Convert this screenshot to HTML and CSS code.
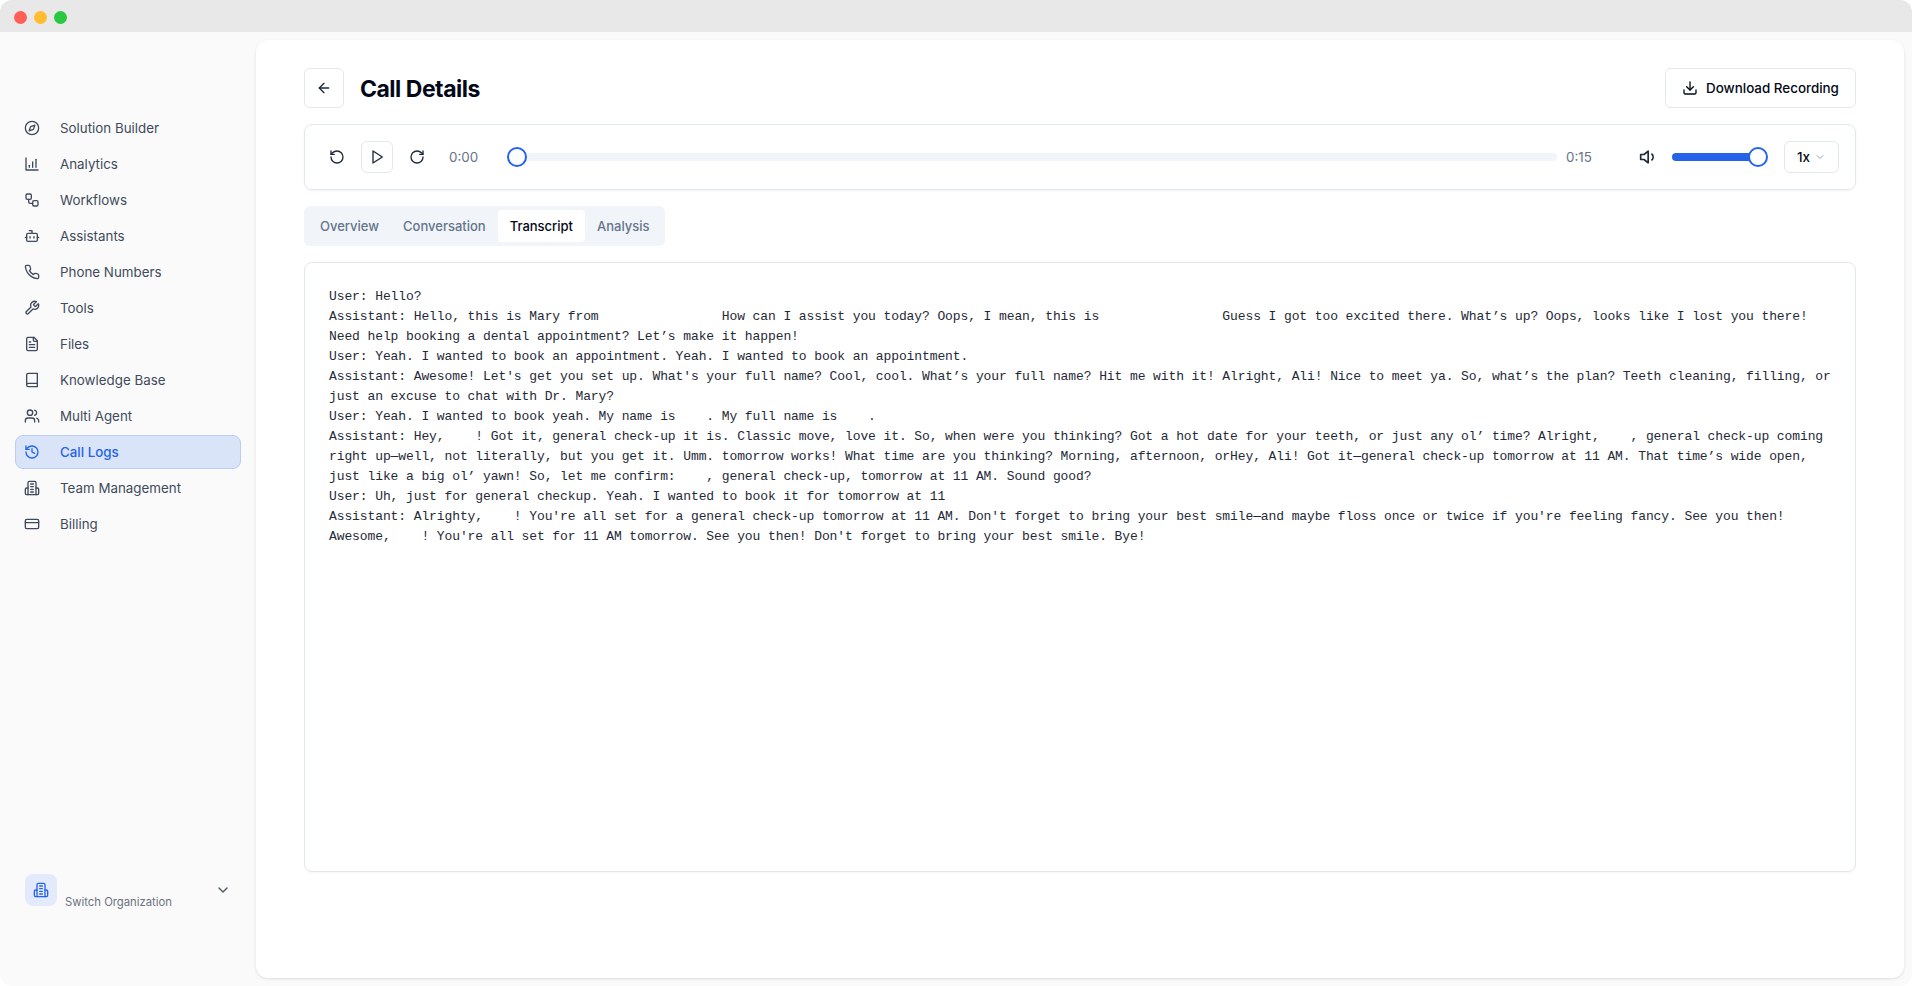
FILE: index.html
```html
<!DOCTYPE html>
<html lang="en">
<head>
<meta charset="utf-8">
<title>Call Details</title>
<link rel="stylesheet" href="styles.css">
</head>
<body>
<div class="window">
  <div class="titlebar">
    <span class="dot dot-red"></span><span class="dot dot-yellow"></span><span class="dot dot-green"></span>
  </div>
  <div class="app">
    <aside class="sidebar">
      <nav class="nav">
        <a class="nav-item"><svg class="icon" viewBox="0 0 24 24"><circle cx="12" cy="12" r="10"/><polygon points="16.24 7.76 14.12 14.12 7.76 16.24 9.88 9.88 16.24 7.76"/></svg><span>Solution Builder</span></a>
        <a class="nav-item"><svg class="icon" viewBox="0 0 24 24"><path d="M3 3v18h18"/><path d="M13 17V9"/><path d="M18 17V5"/><path d="M8 17v-3"/></svg><span>Analytics</span></a>
        <a class="nav-item"><svg class="icon" viewBox="0 0 24 24"><rect x="3" y="3" width="8" height="8" rx="2"/><path d="M7 11v4a2 2 0 0 0 2 2h4"/><rect x="13" y="13" width="8" height="8" rx="2"/></svg><span>Workflows</span></a>
        <a class="nav-item"><svg class="icon" viewBox="0 0 24 24"><path d="M12 8V4H8"/><rect x="4" y="8" width="16" height="12" rx="2"/><path d="M2 14h2"/><path d="M20 14h2"/><path d="M15 13v2"/><path d="M9 13v2"/></svg><span>Assistants</span></a>
        <a class="nav-item"><svg class="icon" viewBox="0 0 24 24"><path d="M22 16.92v3a2 2 0 0 1-2.18 2 19.79 19.79 0 0 1-8.63-3.07 19.5 19.5 0 0 1-6-6 19.79 19.79 0 0 1-3.07-8.67A2 2 0 0 1 4.11 2h3a2 2 0 0 1 2 1.72 12.84 12.84 0 0 0 .7 2.81 2 2 0 0 1-.45 2.11L8.09 9.91a16 16 0 0 0 6 6l1.27-1.27a2 2 0 0 1 2.11-.45 12.84 12.84 0 0 0 2.81.7A2 2 0 0 1 22 16.92z"/></svg><span>Phone Numbers</span></a>
        <a class="nav-item"><svg class="icon" viewBox="0 0 24 24"><path d="M14.7 6.3a1 1 0 0 0 0 1.4l1.6 1.6a1 1 0 0 0 1.4 0l3.77-3.77a6 6 0 0 1-7.94 7.94l-6.91 6.91a2.12 2.12 0 0 1-3-3l6.91-6.91a6 6 0 0 1 7.94-7.94l-3.76 3.76z"/></svg><span>Tools</span></a>
        <a class="nav-item"><svg class="icon" viewBox="0 0 24 24"><path d="M15 2H6a2 2 0 0 0-2 2v16a2 2 0 0 0 2 2h12a2 2 0 0 0 2-2V7Z"/><path d="M14 2v4a2 2 0 0 0 2 2h4"/><path d="M10 9H8"/><path d="M16 13H8"/><path d="M16 17H8"/></svg><span>Files</span></a>
        <a class="nav-item"><svg class="icon" viewBox="0 0 24 24"><path d="M4 19.5v-15A2.5 2.5 0 0 1 6.5 2H20v20H6.5a2.5 2.5 0 0 1 0-5H20"/></svg><span>Knowledge Base</span></a>
        <a class="nav-item"><svg class="icon" viewBox="0 0 24 24"><path d="M16 21v-2a4 4 0 0 0-4-4H6a4 4 0 0 0-4 4v2"/><circle cx="9" cy="7" r="4"/><path d="M22 21v-2a4 4 0 0 0-3-3.87"/><path d="M16 3.13a4 4 0 0 1 0 7.75"/></svg><span>Multi Agent</span></a>
        <a class="nav-item nav-item-active"><svg class="icon" viewBox="0 0 24 24"><path d="M3 12a9 9 0 1 0 9-9 9.75 9.75 0 0 0-6.74 2.74L3 8"/><path d="M3 3v5h5"/><path d="M12 7v5l4 2"/></svg><span>Call Logs</span></a>
        <a class="nav-item"><svg class="icon" viewBox="0 0 24 24"><path d="M6 22V4a2 2 0 0 1 2-2h8a2 2 0 0 1 2 2v18Z"/><path d="M6 12H4a2 2 0 0 0-2 2v6a2 2 0 0 0 2 2h2"/><path d="M18 12h2a2 2 0 0 1 2 2v6a2 2 0 0 1-2 2h-2"/><path d="M10 6h4"/><path d="M10 10h4"/><path d="M10 14h4"/><path d="M10 18h4"/></svg><span>Team Management</span></a>
        <a class="nav-item"><svg class="icon" viewBox="0 0 24 24"><rect x="2" y="5" width="20" height="14" rx="2"/><line x1="2" y1="10" x2="22" y2="10"/></svg><span>Billing</span></a>
      </nav>
      <div class="org">
        <div class="org-badge"><svg class="icon" viewBox="0 0 24 24"><path d="M6 22V4a2 2 0 0 1 2-2h8a2 2 0 0 1 2 2v18Z"/><path d="M6 12H4a2 2 0 0 0-2 2v6a2 2 0 0 0 2 2h2"/><path d="M18 12h2a2 2 0 0 1 2 2v6a2 2 0 0 1-2 2h-2"/><path d="M10 6h4"/><path d="M10 10h4"/><path d="M10 14h4"/><path d="M10 18h4"/></svg></div>
        <div class="org-label">Switch Organization</div>
        <svg class="icon org-chevron" viewBox="0 0 24 24"><path d="m6 9 6 6 6-6"/></svg>
      </div>
    </aside>
    <main class="panel">
      <header class="page-head">
        <div class="page-title-group">
          <button class="square-btn back-btn"><svg class="icon" viewBox="0 0 24 24"><path d="m12 19-7-7 7-7"/><path d="M19 12H5"/></svg></button>
          <h1 class="page-title">Call Details</h1>
        </div>
        <button class="download-btn"><svg class="icon" viewBox="0 0 24 24"><path d="M21 15v4a2 2 0 0 1-2 2H5a2 2 0 0 1-2-2v-4"/><polyline points="7 10 12 15 17 10"/><line x1="12" y1="15" x2="12" y2="3"/></svg>Download Recording</button>
      </header>
      <section class="player">
        <svg class="icon player-icon" viewBox="0 0 24 24"><path d="M3 12a9 9 0 1 0 9-9 9.75 9.75 0 0 0-6.74 2.74L3 8"/><path d="M3 3v5h5"/></svg>
        <button class="square-btn play-btn"><svg class="icon" viewBox="0 0 24 24"><polygon points="6 3 20 12 6 21 6 3"/></svg></button>
        <svg class="icon player-icon" viewBox="0 0 24 24"><path d="M21 12a9 9 0 1 1-9-9c2.52 0 4.93 1 6.74 2.74L21 8"/><path d="M21 3v5h-5"/></svg>
        <span class="time time-start">0:00</span>
        <div class="track"><span class="thumb thumb-start"></span></div>
        <span class="time time-end">0:15</span>
        <svg class="icon volume-icon" viewBox="0 0 24 24"><polygon points="11 5 6 9 2 9 2 15 6 15 11 19 11 5"/><path d="M15.5 8.5a5 5 0 0 1 0 7"/></svg>
        <div class="volume"><span class="thumb thumb-end"></span></div>
        <button class="speed-btn">1x<svg class="icon speed-chevron" viewBox="0 0 24 24"><path d="m6 9 6 6 6-6"/></svg></button>
      </section>
      <div class="tabs">
        <span class="tab">Overview</span>
        <span class="tab">Conversation</span>
        <span class="tab tab-active">Transcript</span>
        <span class="tab">Analysis</span>
      </div>
      <pre class="transcript">User: Hello?
Assistant: Hello, this is Mary from                How can I assist you today? Oops, I mean, this is                Guess I got too excited there. What’s up? Oops, looks like I lost you there!
Need help booking a dental appointment? Let’s make it happen!
User: Yeah. I wanted to book an appointment. Yeah. I wanted to book an appointment.
Assistant: Awesome! Let's get you set up. What's your full name? Cool, cool. What’s your full name? Hit me with it! Alright, Ali! Nice to meet ya. So, what’s the plan? Teeth cleaning, filling, or
just an excuse to chat with Dr. Mary?
User: Yeah. I wanted to book yeah. My name is    . My full name is    .
Assistant: Hey,    ! Got it, general check-up it is. Classic move, love it. So, when were you thinking? Got a hot date for your teeth, or just any ol’ time? Alright,    , general check-up coming
right up—well, not literally, but you get it. Umm. tomorrow works! What time are you thinking? Morning, afternoon, orHey, Ali! Got it—general check-up tomorrow at 11 AM. That time’s wide open,
just like a big ol’ yawn! So, let me confirm:    , general check-up, tomorrow at 11 AM. Sound good?
User: Uh, just for general checkup. Yeah. I wanted to book it for tomorrow at 11
Assistant: Alrighty,    ! You're all set for a general check-up tomorrow at 11 AM. Don't forget to bring your best smile—and maybe floss once or twice if you're feeling fancy. See you then!
Awesome,    ! You're all set for 11 AM tomorrow. See you then! Don't forget to bring your best smile. Bye!</pre>
    </main>
  </div>
</div>
</body>
</html>
```
FILE: styles.css
```css
* { box-sizing: border-box; }
html, body { margin: 0; height: 100%; }
body {
  background: #fff;
  font-family: Inter, "Noto Sans", sans-serif;
  color: #020817;
  overflow: hidden;
}
.window {
  height: 986px;
  display: flex;
  flex-direction: column;
  background: #fafafa;
  border-radius: 12px;
  overflow: hidden;
}
.titlebar {
  height: 32px;
  flex: none;
  background: #e8e8e8;
  display: flex;
  align-items: center;
  gap: 7px;
  padding: 2px 0 0 14px;
}
.dot { width: 13px; height: 13px; border-radius: 50%; }
.dot-red { background: #ff5f57; }
.dot-yellow { background: #febc2e; }
.dot-green { background: #28c840; }
.app { flex: 1; display: flex; min-height: 0; padding: 8px 8px 8px 0; }
.icon {
  width: 16px;
  height: 16px;
  flex: none;
  fill: none;
  stroke: currentColor;
  stroke-width: 2;
  stroke-linecap: round;
  stroke-linejoin: round;
}
.sidebar {
  width: 256px;
  flex: none;
  display: flex;
  flex-direction: column;
  padding: 71px 15px 0;
}
.nav { display: flex; flex-direction: column; gap: 2px; }
.nav-item {
  height: 34px;
  display: flex;
  align-items: center;
  gap: 20px;
  padding-left: 8px;
  font-size: 13.35px;
  color: #3f4a5c;
  border: 1px solid transparent;
  border-radius: 8px;
}
.nav-item-active {
  background: #dae4f9;
  border-color: #b9cdf6;
  color: #2563eb;
  font-weight: 500;
}
.org {
  margin-top: auto;
  margin-bottom: 66px;
  display: flex;
  align-items: flex-start;
  padding-left: 10px;
}
.org-badge {
  width: 32px;
  height: 32px;
  border-radius: 8px;
  background: #e3eafb;
  color: #2563eb;
  display: flex;
  align-items: center;
  justify-content: center;
  flex: none;
}
.org-label {
  margin: 18px 0 0 8px;
  font-size: 11.3px;
  line-height: 20px;
  color: #6b7280;
}
.org-chevron {
  margin: 8px 10px 0 auto;
  color: #4b5563;
}
.panel {
  flex: 1;
  background: #fff;
  border-radius: 12px;
  box-shadow: 0 1px 3px rgba(15, 23, 42, .12);
  padding: 28px 48px 0;
  display: flex;
  flex-direction: column;
  min-width: 0;
}
.page-head {
  height: 40px;
  display: flex;
  align-items: center;
  justify-content: space-between;
}
.page-title-group { display: flex; align-items: center; gap: 16px; }
.page-title { margin: 2px 0 0; font-size: 23px; font-weight: 700; letter-spacing: -.5px; }
.square-btn {
  display: flex;
  align-items: center;
  justify-content: center;
  background: #fff;
  border: 1px solid #e2e8f0;
  border-radius: 6px;
  padding: 0;
  color: #1f2937;
}
.back-btn { width: 40px; height: 40px; }
.play-btn { width: 32px; height: 32px; margin: 0 16px; }
.download-btn {
  height: 40px;
  width: 191px;
  display: flex;
  align-items: center;
  justify-content: center;
  gap: 8px;
  background: #fff;
  border: 1px solid #e2e8f0;
  border-radius: 6px;
  font: 500 13.4px Inter, sans-serif;
  color: #020817;
}
.player {
  margin-top: 16px;
  height: 66px;
  display: flex;
  align-items: center;
  border: 1px solid #e2e8f0;
  border-radius: 8px;
  box-shadow: 0 1px 2px rgba(15, 23, 42, .06);
  padding: 0 16px 0 24px;
}
.player-icon { color: #1f2937; }
.time { font-size: 13.35px; color: #64748b; width: 26px; }
.time-start { margin: 0 32px 0 24px; }
.time-end { margin: 0 47px 0 9px; }
.track {
  flex: 1;
  height: 8px;
  border-radius: 4px;
  background: #f1f5f9;
  position: relative;
}
.thumb {
  position: absolute;
  top: -6px;
  width: 20px;
  height: 20px;
  border-radius: 50%;
  background: #fff;
  border: 2px solid #2563eb;
}
.thumb-start { left: 0; }
.thumb-end { right: -1px; }
.volume-icon { width: 20px; height: 20px; color: #1f2937; }
.volume {
  width: 95px;
  height: 8px;
  margin: 0 17px 0 13px;
  border-radius: 4px;
  background: #2563eb;
  position: relative;
}
.speed-btn {
  width: 55px;
  height: 32px;
  display: flex;
  align-items: center;
  justify-content: center;
  gap: 4px;
  background: #fff;
  border: 1px solid #e2e8f0;
  border-radius: 6px;
  font: 500 13.4px Inter, sans-serif;
  color: #020817;
  padding: 0;
}
.speed-chevron { width: 12px; height: 12px; color: #94a3b8; }
.tabs {
  margin-top: 16px;
  width: 361px;
  height: 40px;
  display: flex;
  align-items: center;
  padding: 4px;
  background: #f1f5f9;
  border-radius: 6px;
}
.tab {
  height: 32px;
  display: flex;
  align-items: center;
  padding: 0 12px;
  font-size: 13px;
  font-weight: 500;
  color: #64748b;
  border-radius: 4px;
}
.tab-active { background: #fff; color: #020817; }
.transcript {
  margin: 16px 0 0;
  height: 610px;
  border: 1px solid #e2e8f0;
  border-radius: 8px;
  box-shadow: 0 1px 2px rgba(15, 23, 42, .04);
  padding: 24px;
  font-family: "Liberation Mono", "DejaVu Sans Mono", monospace;
  font-size: 13px;
  letter-spacing: -.1px;
  line-height: 20px;
  color: #1f2937;
  white-space: pre;
  overflow: hidden;
}
```
